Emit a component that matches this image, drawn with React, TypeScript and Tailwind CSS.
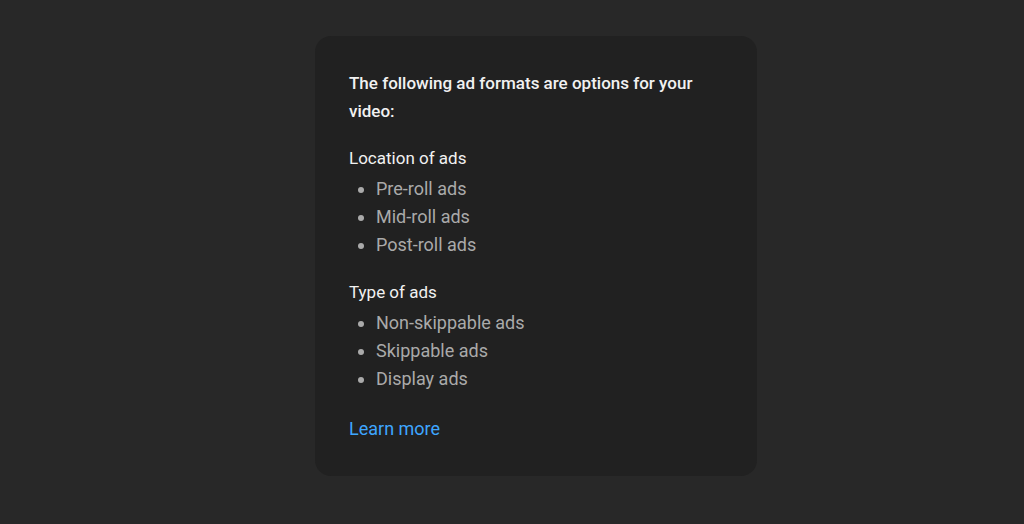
import React from 'react';

const sections = [
  { title: 'Location of ads', items: ['Pre-roll ads', 'Mid-roll ads', 'Post-roll ads'] },
  { title: 'Type of ads', items: ['Non-skippable ads', 'Skippable ads', 'Display ads'] },
];

export default function App() {
  return (
    <div className="min-h-screen w-full bg-[#282828] pt-[36px] pl-[48px] font-['Roboto',sans-serif]">
      <div className="mx-auto w-[442px] rounded-2xl bg-[#212121] pl-[34px] pr-[32px] pt-[33px] pb-[33px]">
        <p className="text-[17px] font-medium leading-[28px] text-[#f1f1f1]">
          The following ad formats are options for your video:
        </p>
        {sections.map((s) => (
          <div key={s.title} className="mt-[19px]">
            <div className="text-[17px] leading-[28px] text-[#f1f1f1]">{s.title}</div>
            <ul className="mt-[3px] list-disc pl-[27px] text-[18px] leading-[28px] text-[#aaaaaa]">
              {s.items.map((item) => (
                <li key={item}>{item}</li>
              ))}
            </ul>
          </div>
        ))}
        <div className="mt-[22px] text-[18px] leading-[28px]">
          <a href="#" className="text-[#3ea6ff]">Learn more</a>
        </div>
      </div>
    </div>
  );
}
